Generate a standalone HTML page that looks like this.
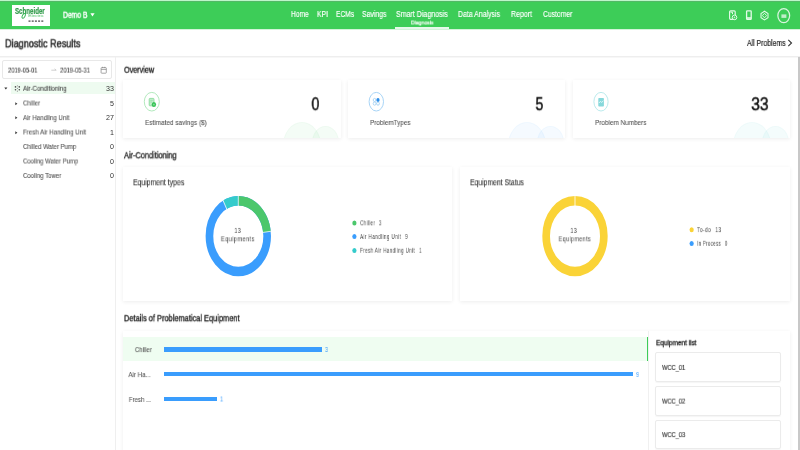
<!DOCTYPE html>
<html><head><meta charset="utf-8"><title>Diagnostic Results</title>
<style>
html,body{margin:0;padding:0;width:800px;height:450px;overflow:hidden;background:#fff;font-family:"Liberation Sans",sans-serif;}
.a{position:absolute;box-sizing:border-box;}
.t{position:absolute;white-space:pre;line-height:normal;will-change:transform;font-family:"Liberation Sans",sans-serif;}
.card{position:absolute;background:#fff;box-shadow:0 1px 4px rgba(0,0,0,0.075);overflow:hidden;}
</style></head><body>
<!-- header -->
<div class="a" style="left:0;top:0;width:800px;height:29px;background:#3dcd58;"></div>
<div class="a" style="left:0;top:0;width:800px;height:1px;background:#bdf6c9;"></div>
<div class="a" style="left:0;top:29px;width:800px;height:1px;background:#d2f4d9;"></div>
<div class="a" style="left:0;top:1px;width:800px;height:1px;background:#52b866;"></div>
<!-- logo -->
<div class="a" style="left:12px;top:5px;width:37.5px;height:21px;background:#fff;"></div>
<svg class="a" style="left:12px;top:5px;will-change:transform" width="38" height="21" viewBox="0 0 38 21">
  <text x="3" y="8.5" font-family="Liberation Sans" font-size="8.8" font-weight="700" fill="#2a9844" stroke="#2a9844" stroke-width="0.2" textLength="29.7" lengthAdjust="spacingAndGlyphs">Schneider</text>
  <ellipse cx="11.7" cy="10.9" rx="1.3" ry="2.6" fill="none" stroke="#35b552" stroke-width="0.9" transform="rotate(28 11.7 10.9)"/>
  <text x="16.3" y="12.3" font-family="Liberation Sans" font-size="3.4" fill="#52c06a" textLength="15.6" lengthAdjust="spacingAndGlyphs">Electric</text>
  <g fill="#777"><rect x="16.5" y="15.3" width="2" height="1.7"/><rect x="19.7" y="15.3" width="2" height="1.7"/><rect x="22.9" y="15.3" width="2" height="1.7"/><rect x="26.1" y="15.3" width="2" height="1.7"/><rect x="29.3" y="15.3" width="2" height="1.7"/></g>
</svg>
<!-- demo triangle -->
<svg class="a" style="left:90px;top:13.2px" width="5" height="4" viewBox="0 0 5 4"><path d="M0.4 0.3 L4.6 0.3 L2.5 3.4 Z" fill="#fff"/></svg>
<!-- nav underline -->
<div class="a" style="left:395px;top:27px;width:53.5px;height:2px;background:#e6f9ea;"></div>
<!-- right icons -->
<svg class="a" style="left:720px;top:0px" width="80" height="29" viewBox="720 0 80 29">
  <g fill="none" stroke="#e4fae8" stroke-width="1.15">
    <rect x="729.6" y="10.8" width="5.6" height="8.5" rx="1"/>
    <rect x="746.6" y="10.8" width="4.6" height="8.5" rx="0.6" stroke-width="1.3"/>
    <path d="M764.5 11.2 L768 13.5 L768 17.6 L764.5 19.9 L761 17.6 L761 13.5 Z" stroke-width="1.05"/>
    <path d="M764.5 13.3 L766.6 15.55 L764.5 17.8 L762.4 15.55 Z" stroke-width="0.9"/>
    <ellipse cx="783.75" cy="15.6" rx="5.9" ry="7.1" stroke="#d9f5df" stroke-width="1.25"/>
  </g>
  <path d="M746.6 18 H751.2" stroke="#e4fae8" stroke-width="1.6"/>
  <path d="M730.5 12.2 H732.5 V14.2" stroke="#e4fae8" stroke-width="1" fill="none"/>
  <circle cx="734.5" cy="17.4" r="2.3" fill="#3dcd58" stroke="#e4fae8" stroke-width="1"/>
  <circle cx="734.5" cy="17.4" r="0.8" fill="#bdf0c8"/>
  <rect x="781.4" y="14.4" width="5" height="3.5" fill="#bfeec9"/>
</svg>
<!-- separator line -->
<div class="a" style="left:0;top:56px;width:800px;height:1px;background:#eeeeee;"></div><div class="a" style="left:0;top:57px;width:800px;height:1px;background:#f7f7f7;"></div>
<!-- left panel border -->
<div class="a" style="left:115px;top:57px;width:1px;height:393px;background:#efefef;"></div>
<!-- scrollbar -->
<div class="a" style="left:798px;top:57px;width:2px;height:393px;background:#c8c8c8;"></div>
<!-- date box -->
<div class="a" style="left:2px;top:60px;width:110px;height:18.5px;border:1px solid #e8e8e8;border-radius:2px;"></div>
<svg class="a" style="left:50.5px;top:68px" width="6" height="4" viewBox="0 0 6 4"><path d="M0.3 2.2 H5.2 M3.6 0.9 L5.2 2.2" fill="none" stroke="#bbb" stroke-width="0.7"/></svg>
<svg class="a" style="left:100px;top:65.5px" width="8" height="8" viewBox="0 0 8 8"><rect x="1.1" y="1.6" width="5.2" height="5.6" rx="0.6" fill="none" stroke="#8a8a8a" stroke-width="0.75"/><path d="M1.1 3.4 H6.3 M2.6 0.8 V2.1 M4.8 0.8 V2.1" stroke="#8a8a8a" stroke-width="0.75"/></svg>
<!-- tree -->
<div class="a" style="left:11px;top:82px;width:104px;height:12px;background:#eefbf0;"></div>
<svg class="a" style="left:4px;top:86.5px" width="4" height="3" viewBox="0 0 4 3"><path d="M0.3 0.4 H3.4 L1.85 2.6Z" fill="#333"/></svg>
<svg class="a" style="left:14px;top:84.5px" width="7" height="8" viewBox="0 0 7 8"><g fill="#4a4a4a"><circle cx="1.5" cy="1.9" r="0.8"/><circle cx="5.3" cy="1.9" r="0.8"/><circle cx="1.5" cy="4.8" r="0.8"/><circle cx="5.3" cy="4.8" r="0.8"/></g><g fill="#999"><circle cx="3.4" cy="0.8" r="0.6"/><circle cx="3.4" cy="6.2" r="0.6"/><circle cx="3.4" cy="3.4" r="0.6"/></g></svg>
<svg class="a" style="left:14.5px;top:101.5px" width="3" height="4" viewBox="0 0 3 4"><path d="M0.3 0.3 V3.3 L2.4 1.8Z" fill="#333"/></svg>
<svg class="a" style="left:14.5px;top:116px" width="3" height="4" viewBox="0 0 3 4"><path d="M0.3 0.3 V3.3 L2.4 1.8Z" fill="#333"/></svg>
<svg class="a" style="left:14.5px;top:130.5px" width="3" height="4" viewBox="0 0 3 4"><path d="M0.3 0.3 V3.3 L2.4 1.8Z" fill="#333"/></svg>

<!-- overview cards -->
<div class="card" style="left:123px;top:80px;width:217.5px;height:58px;">
  <div class="a" style="left:160px;top:42px;width:38px;height:47px;border-radius:50%;background:rgba(61,205,88,0.055);border:1px solid rgba(61,205,88,0.03);"></div>
  <div class="a" style="left:189px;top:46px;width:27px;height:33px;border-radius:50%;background:rgba(61,205,88,0.055);border:1px solid rgba(61,205,88,0.03);"></div>
</div>
<div class="card" style="left:348px;top:80px;width:216.5px;height:58px;">
  <div class="a" style="left:160px;top:42px;width:38px;height:47px;border-radius:50%;background:rgba(24,144,255,0.045);border:1px solid rgba(24,144,255,0.03);"></div>
  <div class="a" style="left:189px;top:46px;width:27px;height:33px;border-radius:50%;background:rgba(24,144,255,0.045);border:1px solid rgba(24,144,255,0.03);"></div>
</div>
<div class="card" style="left:572.5px;top:80px;width:217.5px;height:58px;">
  <div class="a" style="left:160px;top:42px;width:38px;height:47px;border-radius:50%;background:rgba(54,207,201,0.055);border:1px solid rgba(54,207,201,0.03);"></div>
  <div class="a" style="left:189px;top:46px;width:27px;height:33px;border-radius:50%;background:rgba(54,207,201,0.055);border:1px solid rgba(54,207,201,0.03);"></div>
</div>
<!-- card icons -->
<svg class="a" style="left:143px;top:91px" width="18" height="22" viewBox="0 0 18 22">
  <ellipse cx="8.8" cy="10.7" rx="7.5" ry="9.3" fill="none" stroke="#a9e6b5" stroke-width="0.9"/>
  <rect x="6.2" y="7.4" width="4.8" height="7.4" rx="0.7" fill="#c4efcd" stroke="#7fd893" stroke-width="0.8"/><path d="M7.3 9.3 H9.8 M7.3 11 H9" stroke="#7fd893" stroke-width="0.6"/>
  <ellipse cx="10.9" cy="13.6" rx="2.2" ry="2.5" fill="#38c457"/><ellipse cx="10.9" cy="13.6" rx="0.8" ry="0.9" fill="#8fe0a1"/>
</svg>
<svg class="a" style="left:368px;top:91px" width="18" height="22" viewBox="0 0 18 22">
  <ellipse cx="8.3" cy="10.7" rx="7.2" ry="9.3" fill="none" stroke="#9ecff5" stroke-width="0.9"/>
  <ellipse cx="6.6" cy="9" rx="1.4" ry="1.6" fill="none" stroke="#9ccdf3" stroke-width="0.8"/>
  <ellipse cx="10" cy="9" rx="1.6" ry="1.9" fill="#2b8de8"/>
  <ellipse cx="6.6" cy="12.6" rx="1.4" ry="1.6" fill="none" stroke="#9ccdf3" stroke-width="0.8"/>
  <ellipse cx="10" cy="12.6" rx="1.4" ry="1.6" fill="none" stroke="#9ccdf3" stroke-width="0.8"/>
</svg>
<svg class="a" style="left:592px;top:91px" width="18" height="22" viewBox="0 0 18 22">
  <ellipse cx="9" cy="10.7" rx="7.1" ry="9.3" fill="none" stroke="#b3e8ea" stroke-width="0.9"/>
  <rect x="6.3" y="6.9" width="5.6" height="8.6" rx="0.8" fill="#86d8db"/>
  <path d="M7 12 L8.3 10.4 L9.8 11.5 L11.3 9.6" fill="none" stroke="#e8fbfb" stroke-width="0.8"/>
</svg>

<!-- AC cards -->
<div class="card" style="left:122.5px;top:167px;width:329.5px;height:133.5px;"></div>
<div class="card" style="left:460px;top:167px;width:330px;height:133.5px;"></div>
<!-- donut 1 -->
<svg class="a" style="left:200px;top:190px" width="80" height="92" viewBox="0 0 80 92">
  <g transform="translate(38.3,46.1) scale(0.815,1)">
    <circle r="35.4" fill="none" stroke="#3a9dfd" stroke-width="9.4"/>
    <circle r="35.4" fill="none" stroke="#4bc76c" stroke-width="9.4" stroke-dasharray="51.3 1000" transform="rotate(-90)"/>
    <circle r="35.4" fill="none" stroke="#34cbcb" stroke-width="9.4" stroke-dasharray="17.1 1000" transform="rotate(-117.7)"/>
    <path d="M0 -41 V-30" stroke="#fff" stroke-width="0.8"/>
    <path d="M0 -41 V-30" stroke="#fff" stroke-width="0.8" transform="rotate(83.1)"/>
    <path d="M0 -41 V-30" stroke="#fff" stroke-width="0.8" transform="rotate(-27.7)"/>
  </g>
</svg>
<!-- donut 2 -->
<svg class="a" style="left:535px;top:190px" width="80" height="92" viewBox="0 0 80 92">
  <g transform="translate(40,46.1) scale(0.815,1)">
    <circle r="35.4" fill="none" stroke="#fad337" stroke-width="9.4"/>
    <path d="M0 -41 V-30" stroke="#fff" stroke-width="0.9"/>
  </g>
</svg>
<!-- legend dots -->
<svg class="a" style="left:350px;top:218px" width="10" height="38" viewBox="0 0 10 38">
  <ellipse cx="4.4" cy="4.9" rx="2.1" ry="2.5" fill="#4bc76c"/>
  <ellipse cx="4.4" cy="18.6" rx="2.1" ry="2.5" fill="#3a9dfd"/>
  <ellipse cx="4.4" cy="32.4" rx="2.1" ry="2.5" fill="#34cbcb"/>
</svg>
<svg class="a" style="left:686px;top:225px" width="10" height="24" viewBox="0 0 10 24">
  <ellipse cx="5.65" cy="4.75" rx="2.1" ry="2.5" fill="#fad337"/>
  <ellipse cx="5.65" cy="18.4" rx="2.1" ry="2.5" fill="#3a9dfd"/>
</svg>

<!-- details card -->
<div class="card" style="left:122.5px;top:331px;width:667px;height:130px;"></div>
<div class="a" style="left:123px;top:336.7px;width:524px;height:24.5px;background:#effdf1;"></div>
<div class="a" style="left:646.5px;top:336.7px;width:1.5px;height:24.5px;background:#3dcd58;"></div>
<div class="a" style="left:648px;top:331px;width:1px;height:119px;background:#f0f0f0;"></div>
<div class="a" style="left:164px;top:347px;width:158px;height:4.5px;background:#3a9dfd;"></div>
<div class="a" style="left:164px;top:371.8px;width:469px;height:4.5px;background:#3a9dfd;"></div>
<div class="a" style="left:164px;top:396.6px;width:52.8px;height:4.5px;background:#3a9dfd;"></div>
<div class="a" style="left:655.2px;top:352.4px;width:126.3px;height:29.6px;border:1px solid #ebebeb;border-radius:2px;box-shadow:0 1px 1px rgba(0,0,0,0.04);"></div>
<div class="a" style="left:655.2px;top:386.1px;width:126.3px;height:29.6px;border:1px solid #ebebeb;border-radius:2px;box-shadow:0 1px 1px rgba(0,0,0,0.04);"></div>
<div class="a" style="left:655.2px;top:419.8px;width:126.3px;height:29.6px;border:1px solid #ebebeb;border-radius:2px;box-shadow:0 1px 1px rgba(0,0,0,0.04);"></div>

<svg class="a" style="left:786.5px;top:39px" width="6" height="8" viewBox="0 0 6 8"><path d="M1.3 0.9 L4.5 4 L1.3 7.1" fill="none" stroke="#333" stroke-width="1.1"/></svg>
<div class="t" style="top:9px;font-size:8.5px;color:#fff;font-weight:400;-webkit-text-stroke:0.4px #fff;left:62.75px;transform-origin:0 0;transform:translateY(0.80px) scaleX(0.794);">Demo B</div>
<div class="t" style="top:10px;font-size:8.2px;color:#fff;font-weight:400;-webkit-text-stroke:0.15px #fff;left:290.50px;transform-origin:0 0;transform:translateY(0.00px) scaleX(0.810);">Home</div>
<div class="t" style="top:10px;font-size:8.2px;color:#fff;font-weight:400;-webkit-text-stroke:0.15px #fff;left:316.70px;transform-origin:0 0;transform:translateY(0.00px) scaleX(0.833);">KPI</div>
<div class="t" style="top:10px;font-size:8.2px;color:#fff;font-weight:400;-webkit-text-stroke:0.15px #fff;left:335.80px;transform-origin:0 0;transform:translateY(0.00px) scaleX(0.807);">ECMs</div>
<div class="t" style="top:10px;font-size:8.2px;color:#fff;font-weight:400;-webkit-text-stroke:0.15px #fff;left:362.20px;transform-origin:0 0;transform:translateY(0.00px) scaleX(0.841);">Savings</div>
<div class="t" style="top:10px;font-size:8.2px;color:#fff;font-weight:400;-webkit-text-stroke:0.15px #fff;left:395.60px;transform-origin:0 0;transform:translateY(0.00px) scaleX(0.861);">Smart Diagnosis</div>
<div class="t" style="top:10px;font-size:8.2px;color:#fff;font-weight:400;-webkit-text-stroke:0.15px #fff;left:458.00px;transform-origin:0 0;transform:translateY(0.00px) scaleX(0.847);">Data Analysis</div>
<div class="t" style="top:10px;font-size:8.2px;color:#fff;font-weight:400;-webkit-text-stroke:0.15px #fff;left:511.00px;transform-origin:0 0;transform:translateY(0.00px) scaleX(0.854);">Report</div>
<div class="t" style="top:10px;font-size:8.2px;color:#fff;font-weight:400;-webkit-text-stroke:0.15px #fff;left:543.00px;transform-origin:0 0;transform:translateY(0.00px) scaleX(0.828);">Customer</div>
<div class="t" style="top:18px;font-size:6.2px;color:#fff;font-weight:400;-webkit-text-stroke:0.2px #fff;left:410.50px;transform-origin:0 0;transform:translateY(0.50px) scaleX(0.828);">Diagnosis</div>
<div class="t" style="top:37px;font-size:11.4px;color:#2a2a2a;font-weight:400;-webkit-text-stroke:0.5px #2a2a2a;left:4.50px;transform-origin:0 0;transform:translateY(0.30px) scaleX(0.800);">Diagnostic Results</div>
<div class="t" style="top:38px;font-size:8.8px;color:#2a2a2a;font-weight:400;-webkit-text-stroke:0.2px #2a2a2a;left:747.00px;transform-origin:0 0;transform:translateY(0.00px) scaleX(0.782);">All Problems</div>
<div class="t" style="top:65px;font-size:8.0px;color:#444;font-weight:400;-webkit-text-stroke:0.1px #444;left:7.80px;transform-origin:0 0;transform:translateY(0.60px) scaleX(0.718);">2019-05-01</div>
<div class="t" style="top:65px;font-size:8.0px;color:#444;font-weight:400;-webkit-text-stroke:0.1px #444;left:60.00px;transform-origin:0 0;transform:translateY(0.60px) scaleX(0.733);">2019-05-31</div>
<div class="t" style="top:84px;font-size:7.1px;color:#444;font-weight:400;-webkit-text-stroke:0.1px #444;left:22.50px;transform-origin:0 0;transform:translateY(0.80px) scaleX(0.864);">Air-Conditioning</div>
<div class="t" style="top:84px;font-size:7.1px;color:#333;font-weight:400;left:106.01px;transform-origin:100% 0;transform:translateY(0.80px) scaleX(1.000);">33</div>
<div class="t" style="top:99px;font-size:7.1px;color:#555;font-weight:400;-webkit-text-stroke:0.1px #555;left:22.50px;transform-origin:0 0;transform:translateY(0.50px) scaleX(0.855);">Chiller</div>
<div class="t" style="top:99px;font-size:7.1px;color:#333;font-weight:400;left:109.95px;transform-origin:100% 0;transform:translateY(0.50px) scaleX(1.000);">5</div>
<div class="t" style="top:114px;font-size:7.1px;color:#555;font-weight:400;-webkit-text-stroke:0.1px #555;left:22.50px;transform-origin:0 0;transform:translateY(0.10px) scaleX(0.873);">Air Handling Unit</div>
<div class="t" style="top:114px;font-size:7.1px;color:#333;font-weight:400;left:106.01px;transform-origin:100% 0;transform:translateY(0.10px) scaleX(1.000);">27</div>
<div class="t" style="top:128px;font-size:7.1px;color:#555;font-weight:400;-webkit-text-stroke:0.1px #555;left:22.50px;transform-origin:0 0;transform:translateY(0.50px) scaleX(0.865);">Fresh Air Handling Unit</div>
<div class="t" style="top:128px;font-size:7.1px;color:#333;font-weight:400;left:109.95px;transform-origin:100% 0;transform:translateY(0.50px) scaleX(1.000);">1</div>
<div class="t" style="top:143px;font-size:7.1px;color:#555;font-weight:400;-webkit-text-stroke:0.1px #555;left:22.50px;transform-origin:0 0;transform:translateY(0.00px) scaleX(0.848);">Chilled Water Pump</div>
<div class="t" style="top:143px;font-size:7.1px;color:#333;font-weight:400;left:109.95px;transform-origin:100% 0;transform:translateY(0.00px) scaleX(1.000);">0</div>
<div class="t" style="top:157px;font-size:7.1px;color:#555;font-weight:400;-webkit-text-stroke:0.1px #555;left:22.50px;transform-origin:0 0;transform:translateY(0.50px) scaleX(0.848);">Cooling Water Pump</div>
<div class="t" style="top:157px;font-size:7.1px;color:#333;font-weight:400;left:109.95px;transform-origin:100% 0;transform:translateY(0.50px) scaleX(1.000);">0</div>
<div class="t" style="top:172px;font-size:7.1px;color:#555;font-weight:400;-webkit-text-stroke:0.1px #555;left:22.50px;transform-origin:0 0;transform:translateY(0.00px) scaleX(0.852);">Cooling Tower</div>
<div class="t" style="top:172px;font-size:7.1px;color:#333;font-weight:400;left:109.95px;transform-origin:100% 0;transform:translateY(0.00px) scaleX(1.000);">0</div>
<div class="t" style="top:64px;font-size:9.2px;color:#222;font-weight:400;-webkit-text-stroke:0.35px #222;left:123.90px;transform-origin:0 0;transform:translateY(0.70px) scaleX(0.783);">Overview</div>
<div class="t" style="top:118px;font-size:8.0px;color:#5a5a5a;font-weight:400;-webkit-text-stroke:0.12px #5a5a5a;left:145.00px;transform-origin:0 0;transform:translateY(0.00px) scaleX(0.803);">Estimated savings ($)</div>
<div class="t" style="top:118px;font-size:8.0px;color:#5a5a5a;font-weight:400;-webkit-text-stroke:0.12px #5a5a5a;left:370.00px;transform-origin:0 0;transform:translateY(0.00px) scaleX(0.792);">ProblemTypes</div>
<div class="t" style="top:118px;font-size:8.0px;color:#5a5a5a;font-weight:400;-webkit-text-stroke:0.12px #5a5a5a;left:594.50px;transform-origin:0 0;transform:translateY(0.00px) scaleX(0.799);">Problem Numbers</div>
<div class="t" style="top:93px;font-size:18.5px;color:#111;font-weight:400;-webkit-text-stroke:0.45px #111;left:308.60px;transform-origin:100% 0;transform:translateY(0.20px) scaleX(0.758);">0</div>
<div class="t" style="top:93px;font-size:18.5px;color:#111;font-weight:400;-webkit-text-stroke:0.45px #111;left:533.40px;transform-origin:100% 0;transform:translateY(0.20px) scaleX(0.758);">5</div>
<div class="t" style="top:93px;font-size:18.5px;color:#111;font-weight:400;-webkit-text-stroke:0.45px #111;left:748.12px;transform-origin:100% 0;transform:translateY(0.20px) scaleX(0.846);">33</div>
<div class="t" style="top:150px;font-size:9.0px;color:#222;font-weight:400;-webkit-text-stroke:0.35px #222;left:123.90px;transform-origin:0 0;transform:translateY(0.30px) scaleX(0.820);">Air-Conditioning</div>
<div class="t" style="top:177px;font-size:8.8px;color:#333;font-weight:400;-webkit-text-stroke:0.12px #333;left:132.60px;transform-origin:0 0;transform:translateY(0.30px) scaleX(0.781);">Equipment types</div>
<div class="t" style="top:177px;font-size:8.8px;color:#333;font-weight:400;-webkit-text-stroke:0.12px #333;left:469.50px;transform-origin:0 0;transform:translateY(0.30px) scaleX(0.775);">Equipment Status</div>
<div class="t" style="top:225px;font-size:7.6px;color:#444;font-weight:400;left:232.67px;transform-origin:50% 0;transform:translateY(0.90px) scaleX(0.725);letter-spacing:0.6px;">13</div>
<div class="t" style="top:234px;font-size:7.4px;color:#444;font-weight:400;left:216.33px;transform-origin:50% 0;transform:translateY(0.30px) scaleX(0.776);letter-spacing:0.45px;">Equipments</div>
<div class="t" style="top:225px;font-size:7.6px;color:#444;font-weight:400;left:569.37px;transform-origin:50% 0;transform:translateY(0.90px) scaleX(0.725);letter-spacing:0.6px;">13</div>
<div class="t" style="top:234px;font-size:7.4px;color:#444;font-weight:400;left:553.23px;transform-origin:50% 0;transform:translateY(0.30px) scaleX(0.740);letter-spacing:0.45px;">Equipments</div>
<div class="t" style="top:219px;font-size:6.6px;color:#444;font-weight:400;left:360.00px;transform-origin:0 0;transform:translateY(0.30px) scaleX(0.685);letter-spacing:0.5px;">Chiller  3</div>
<div class="t" style="top:233px;font-size:6.6px;color:#444;font-weight:400;left:360.00px;transform-origin:0 0;transform:translateY(0.00px) scaleX(0.710);letter-spacing:0.5px;">Air Handling Unit  9</div>
<div class="t" style="top:246px;font-size:6.6px;color:#444;font-weight:400;left:360.00px;transform-origin:0 0;transform:translateY(0.80px) scaleX(0.695);letter-spacing:0.5px;">Fresh Air Handling Unit  1</div>
<div class="t" style="top:226px;font-size:6.8px;color:#444;font-weight:400;left:697.25px;transform-origin:0 0;transform:translateY(0.10px) scaleX(0.721);letter-spacing:0.5px;">To-do  13</div>
<div class="t" style="top:239px;font-size:6.8px;color:#444;font-weight:400;left:697.25px;transform-origin:0 0;transform:translateY(0.80px) scaleX(0.649);letter-spacing:0.5px;">In Process  0</div>
<div class="t" style="top:313px;font-size:8.8px;color:#222;font-weight:400;-webkit-text-stroke:0.35px #222;left:124.00px;transform-origin:0 0;transform:translateY(0.20px) scaleX(0.844);">Details of Problematical Equipment</div>
<div class="t" style="top:345px;font-size:7.4px;color:#555;font-weight:400;-webkit-text-stroke:0.1px #555;left:130.65px;transform-origin:100% 0;transform:translateY(0.10px) scaleX(0.816);">Chiller</div>
<div class="t" style="top:370px;font-size:7.4px;color:#555;font-weight:400;-webkit-text-stroke:0.1px #555;left:124.10px;transform-origin:100% 0;transform:translateY(0.10px) scaleX(0.835);">Air Ha...</div>
<div class="t" style="top:395px;font-size:7.4px;color:#555;font-weight:400;-webkit-text-stroke:0.1px #555;left:123.69px;transform-origin:100% 0;transform:translateY(0.00px) scaleX(0.823);">Fresh ...</div>
<div class="t" style="top:346px;font-size:6.5px;color:#3a9dfd;font-weight:400;left:325.00px;transform-origin:0 0;transform:translateY(0.00px) scaleX(0.840);">3</div>
<div class="t" style="top:371px;font-size:6.5px;color:#3a9dfd;font-weight:400;left:636.00px;transform-origin:0 0;transform:translateY(0.00px) scaleX(0.840);">9</div>
<div class="t" style="top:395px;font-size:6.5px;color:#3a9dfd;font-weight:400;left:220.40px;transform-origin:0 0;transform:translateY(0.50px) scaleX(0.840);">1</div>
<div class="t" style="top:338px;font-size:7.4px;color:#222;font-weight:400;-webkit-text-stroke:0.3px #222;left:655.50px;transform-origin:0 0;transform:translateY(0.20px) scaleX(0.872);">Equipment list</div>
<div class="t" style="top:362px;font-size:7.3px;color:#333;font-weight:400;-webkit-text-stroke:0.15px #333;left:662.10px;transform-origin:0 0;transform:translateY(0.90px) scaleX(0.784);">WCC_01</div>
<div class="t" style="top:396px;font-size:7.3px;color:#333;font-weight:400;-webkit-text-stroke:0.15px #333;left:662.10px;transform-origin:0 0;transform:translateY(0.60px) scaleX(0.784);">WCC_02</div>
<div class="t" style="top:430px;font-size:7.3px;color:#333;font-weight:400;-webkit-text-stroke:0.15px #333;left:662.10px;transform-origin:0 0;transform:translateY(0.10px) scaleX(0.784);">WCC_03</div>
</body></html>
